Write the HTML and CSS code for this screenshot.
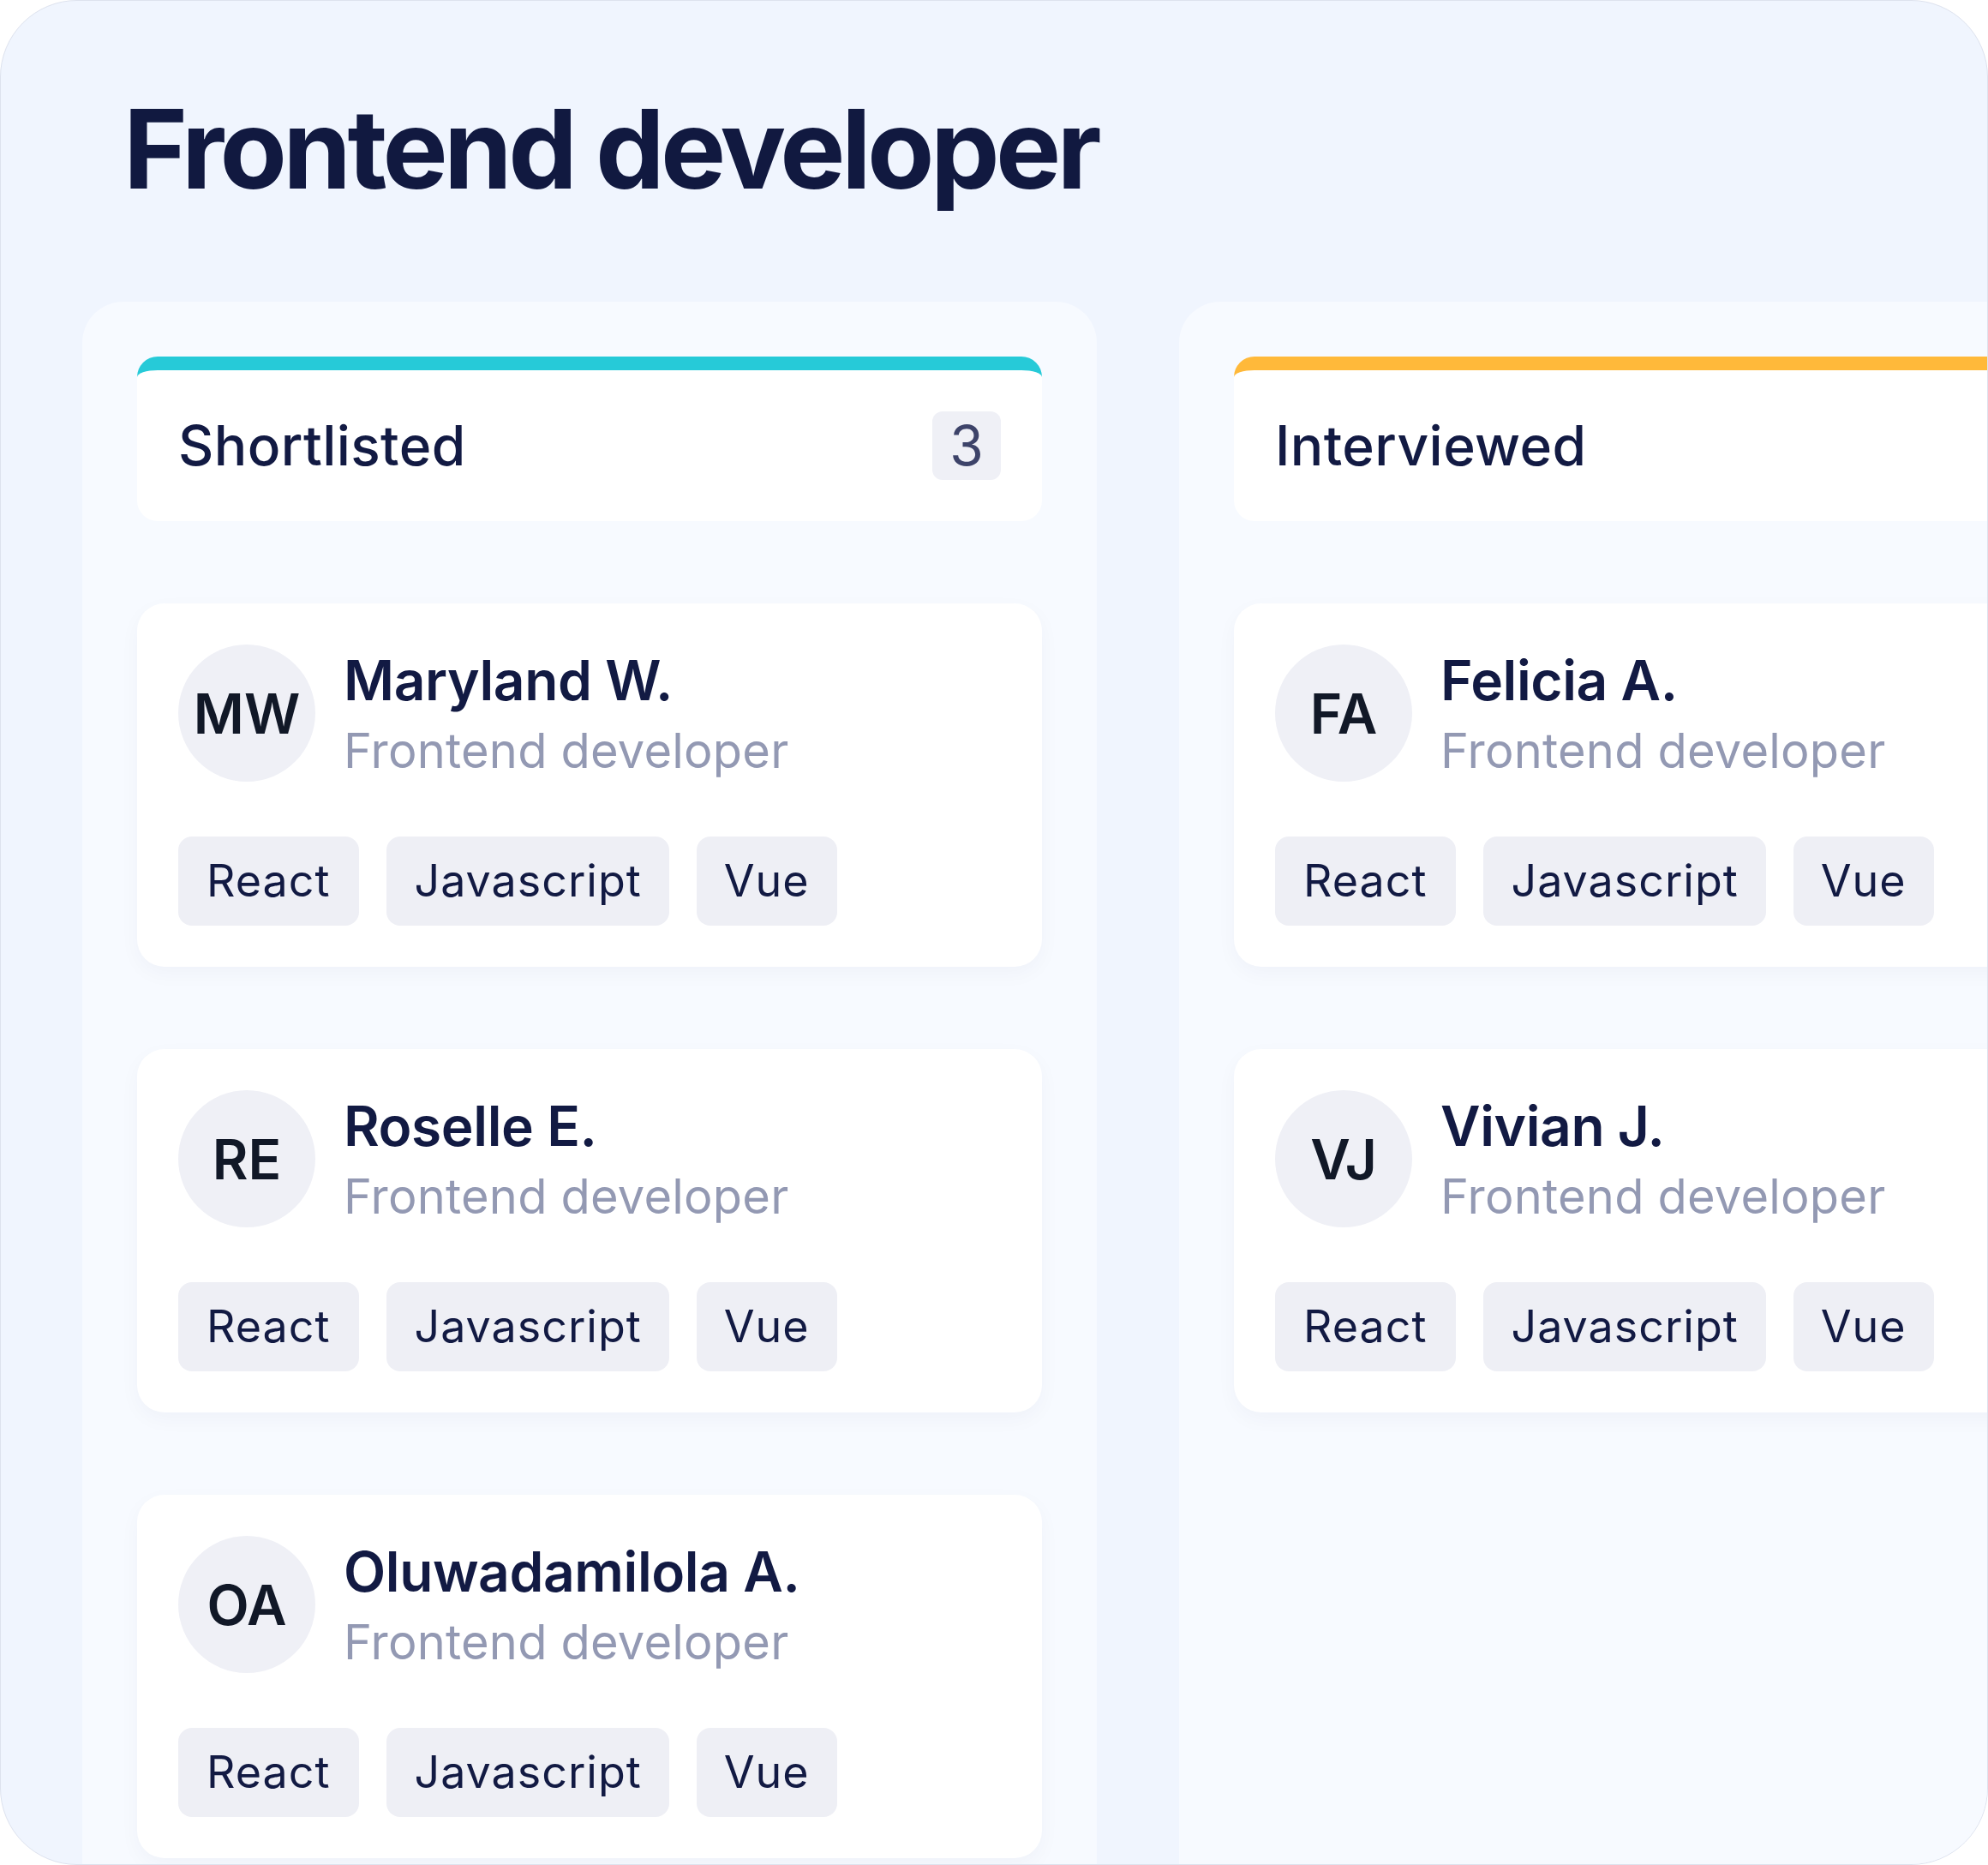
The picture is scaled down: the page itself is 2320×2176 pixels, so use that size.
FILE: index.html
```html
<!DOCTYPE html>
<html lang="en">
<head>
<meta charset="utf-8">
<title>Frontend developer</title>
<link rel="stylesheet" href="styles.css">
</head>
<body>
<div class="frame">
  <h1 class="title">Frontend developer</h1>
  <div class="board">
    <section class="column">
      <header class="col-head col-head--teal">
        <span class="col-title">Shortlisted</span>
        <span class="count">3</span>
      </header>
      <article class="card">
        <div class="person">
          <div class="avatar">MW</div>
          <div class="info">
            <div class="name">Maryland W.</div>
            <div class="role">Frontend developer</div>
          </div>
        </div>
        <div class="tags"><span class="tag">React</span><span class="tag">Javascript</span><span class="tag">Vue</span></div>
      </article>
      <article class="card">
        <div class="person">
          <div class="avatar">RE</div>
          <div class="info">
            <div class="name">Roselle E.</div>
            <div class="role">Frontend developer</div>
          </div>
        </div>
        <div class="tags"><span class="tag">React</span><span class="tag">Javascript</span><span class="tag">Vue</span></div>
      </article>
      <article class="card">
        <div class="person">
          <div class="avatar">OA</div>
          <div class="info">
            <div class="name">Oluwadamilola A.</div>
            <div class="role">Frontend developer</div>
          </div>
        </div>
        <div class="tags"><span class="tag">React</span><span class="tag">Javascript</span><span class="tag">Vue</span></div>
      </article>
    </section>
    <section class="column">
      <header class="col-head col-head--amber">
        <span class="col-title">Interviewed</span>
      </header>
      <article class="card">
        <div class="person">
          <div class="avatar">FA</div>
          <div class="info">
            <div class="name">Felicia A.</div>
            <div class="role">Frontend developer</div>
          </div>
        </div>
        <div class="tags"><span class="tag">React</span><span class="tag">Javascript</span><span class="tag">Vue</span></div>
      </article>
      <article class="card">
        <div class="person">
          <div class="avatar">VJ</div>
          <div class="info">
            <div class="name">Vivian J.</div>
            <div class="role">Frontend developer</div>
          </div>
        </div>
        <div class="tags"><span class="tag">React</span><span class="tag">Javascript</span><span class="tag">Vue</span></div>
      </article>
    </section>
  </div>
</div>
</body>
</html>
```
FILE: styles.css
```css
* { box-sizing: border-box; }

html, body {
  margin: 0;
  padding: 0;
  background: #ffffff;
}

body {
  font-family: Inter, "Noto Sans", "Liberation Sans", sans-serif;
  color: #121a43;
}

.frame {
  width: 2320px;
  height: 2176px;
  border-radius: 90px;
  overflow: hidden;
  background: #f0f5fe;
  border: 1px solid #dde2ee;
  display: flex;
  flex-direction: column;
  padding: 93px 0 0 95px;
}

.title {
  margin: 0 0 98px 48px;
  font-size: 128px;
  line-height: 160px;
  font-weight: 700;
  letter-spacing: -4.6px;
  color: #111940;
}

.board {
  flex: 1;
  display: flex;
  gap: 96px;
  align-items: stretch;
}

.column {
  flex: 0 0 1184px;
  width: 1184px;
  background: #f7faff;
  border-radius: 48px;
  padding: 64px;
  display: flex;
  flex-direction: column;
  gap: 96px;
}

.col-head {
  height: 192px;
  flex: 0 0 192px;
  background: #ffffff;
  border-radius: 24px;
  border-top: 16px solid #26cad8;
  padding: 0 48px;
  display: flex;
  align-items: center;
  justify-content: space-between;
}

.col-head--amber { border-top-color: #ffb93a; }

.col-title {
  font-size: 64px;
  font-weight: 500;
  color: #121a43;
  letter-spacing: 0.4px;
  position: relative;
  top: -1px;
}

.count {
  min-width: 80px;
  height: 80px;
  padding: 0 20px;
  border-radius: 12px;
  background: #eff0f6;
  color: #3d4369;
  font-size: 64px;
  line-height: 80px;
  text-align: center;
}

.card {
  flex: 0 0 auto;
  background: #ffffff;
  border-radius: 32px;
  padding: 48px;
  box-shadow: 0 8px 24px rgba(20, 30, 80, 0.035);
}

.person {
  display: flex;
  align-items: flex-start;
  gap: 33px;
}

.avatar {
  width: 160px;
  height: 160px;
  flex: 0 0 160px;
  border-radius: 50%;
  background: #eff0f6;
  color: #111827;
  font-size: 64px;
  font-weight: 600;
  display: flex;
  align-items: center;
  justify-content: center;
}

.info {
  display: flex;
  flex-direction: column;
}

.name {
  font-size: 64px;
  line-height: 84px;
  font-weight: 600;
  letter-spacing: -0.4px;
  color: #121a43;
}

.role {
  margin-top: 4px;
  font-size: 56px;
  line-height: 72px;
  letter-spacing: 0.2px;
  color: #9399b3;
}

.tags {
  margin-top: 64px;
  display: flex;
  gap: 32px;
}

.tag {
  height: 104px;
  line-height: 104px;
  padding: 0 32px;
  border-radius: 16px;
  background: #eeeff5;
  font-size: 52px;
  color: #121a43;
  letter-spacing: 1px;
}

.tag:first-child { padding: 0 34px 0 33px; }
```
